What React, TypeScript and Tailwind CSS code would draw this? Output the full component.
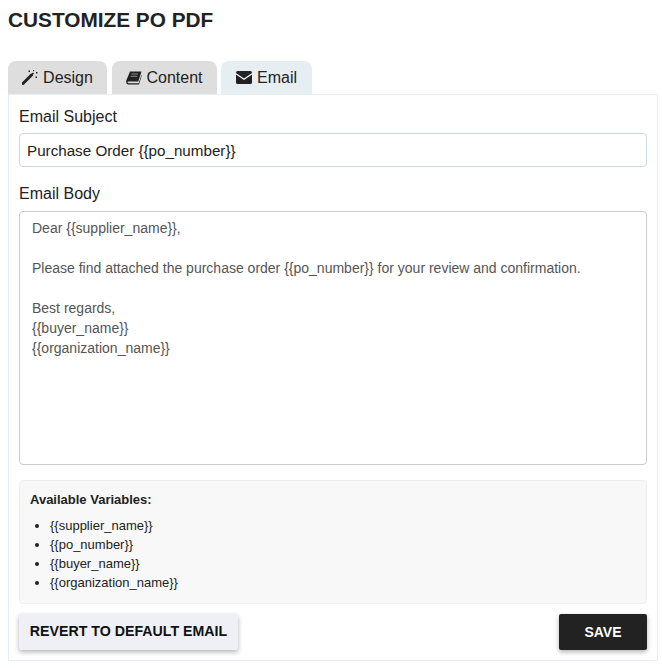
const emailBody = `Dear {{supplier_name}},

Please find attached the purchase order {{po_number}} for your review and confirmation.

Best regards,
{{buyer_name}}
{{organization_name}}`;

const variables = ['{{supplier_name}}', '{{po_number}}', '{{buyer_name}}', '{{organization_name}}'];

function WandIcon() {
  return (
    <svg width="16" height="15" viewBox="0 0 16 15" fill="none" className="shrink-0">
      <path d="M1 13.5 L9.5 5" stroke="#222" strokeWidth="3" strokeLinecap="round" />
      <path d="M9.5 5 L11.5 3" stroke="#222" strokeWidth="1.6" />
      <g fill="#222">
        <rect x="6.5" y="0.5" width="1.5" height="1.5" />
        <rect x="11" y="0" width="1.2" height="1.2" />
        <rect x="14" y="2" width="1.5" height="1.5" />
        <rect x="13.5" y="6.5" width="1.5" height="1.5" />
      </g>
    </svg>
  );
}

function BookIcon() {
  return (
    <svg width="16" height="14" viewBox="0 0 16 14" className="shrink-0">
      <path
        d="M4 0.5 H15.5 L12.3 10.5 H2.6 C1.2 10.5 1.2 12.2 2.6 12.2 H12.6 L15.7 3.5 L15.9 4.2 L13 13.5 H2.4 C0.6 13.5 -0.3 11.6 0.3 9.5 Z"
        fill="#222"
      />
      <path d="M5.5 3 H12 M4.7 5.3 H11.2" stroke="#fff" strokeWidth="0.8" opacity="0.6" />
    </svg>
  );
}

function EnvelopeIcon() {
  return (
    <svg width="16" height="13" viewBox="0 0 16 13" className="shrink-0">
      <rect x="0" y="0" width="16" height="13" rx="1.5" fill="#222" />
      <path d="M0 2.8 L8 8.3 L16 2.8" fill="none" stroke="#fff" strokeWidth="1.2" />
    </svg>
  );
}

export default function App() {
  return (
    <div className="min-h-[668px] bg-white px-2 pt-[8px] font-['Liberation_Sans',Arial,sans-serif] text-[#222]">
      <h1 className="h-[24px] text-[20.8px] leading-[24px] font-bold text-[#222]">CUSTOMIZE PO PDF</h1>

      {/* Tabs */}
      <div className="mt-[29px] flex h-[33px] text-[16px] leading-[33px]">
        <div className="flex w-[99px] shrink-0 items-center justify-center gap-[5px] rounded-t-[8px] bg-[#dedede]">
          <WandIcon />
          <span>Design</span>
        </div>
        <div className="ml-[5px] flex w-[105px] shrink-0 items-center justify-center gap-[4px] rounded-t-[8px] bg-[#dedede]">
          <BookIcon />
          <span>Content</span>
        </div>
        <div className="ml-[4px] flex w-[91px] shrink-0 items-center justify-center gap-[5px] rounded-t-[8px] bg-[#e6eef1]">
          <EnvelopeIcon />
          <span>Email</span>
        </div>
      </div>

      {/* Panel */}
      <div className="h-[567px] w-[650px] border border-[#e6eef1] px-[10px] pt-[11px]">
        <label className="block h-[22px] text-[16px] leading-[22px]">Email Subject</label>
        <input
          readOnly
          value="Purchase Order {{po_number}}"
          className="mt-[5px] block h-[34px] w-full rounded-[4px] border border-[#c8d9e1] px-[7px] text-[15.2px] text-[#222] outline-none"
        />
        <label className="mt-[16px] block h-[22px] text-[16px] leading-[22px]">Email Body</label>
        <textarea
          readOnly
          value={emailBody}
          className="mt-[6px] block h-[254px] w-full resize-none rounded-[4px] border border-[#ccc] px-[12px] py-[6px] text-[14px] leading-[20px] text-[#555] outline-none"
        />

        <div className="mt-[15px] h-[124px] rounded-[4px] border border-[#eee] bg-[#f8f8f8] px-[10px] pt-[11px]">
          <div className="text-[13px] leading-[16px] font-bold">Available Variables:</div>
          <ul className="mt-[8px] list-disc pl-[20px] text-[13px] leading-[19px]">
            {variables.map(v => (
              <li key={v}>{v}</li>
            ))}
          </ul>
        </div>

        <div className="mt-[10px] flex justify-between">
          <button className="h-[36px] w-[219px] rounded-[2px] bg-[#eef0f5] text-[14.2px] font-bold text-[#111] shadow-[0_2px_5px_rgba(0,0,0,0.3)]">
            REVERT TO DEFAULT EMAIL
          </button>
          <button className="h-[36px] w-[88px] rounded-[2px] bg-[#222] text-[14px] font-bold text-white shadow-[0_2px_5px_rgba(0,0,0,0.3)]">
            SAVE
          </button>
        </div>
      </div>
    </div>
  );
}
